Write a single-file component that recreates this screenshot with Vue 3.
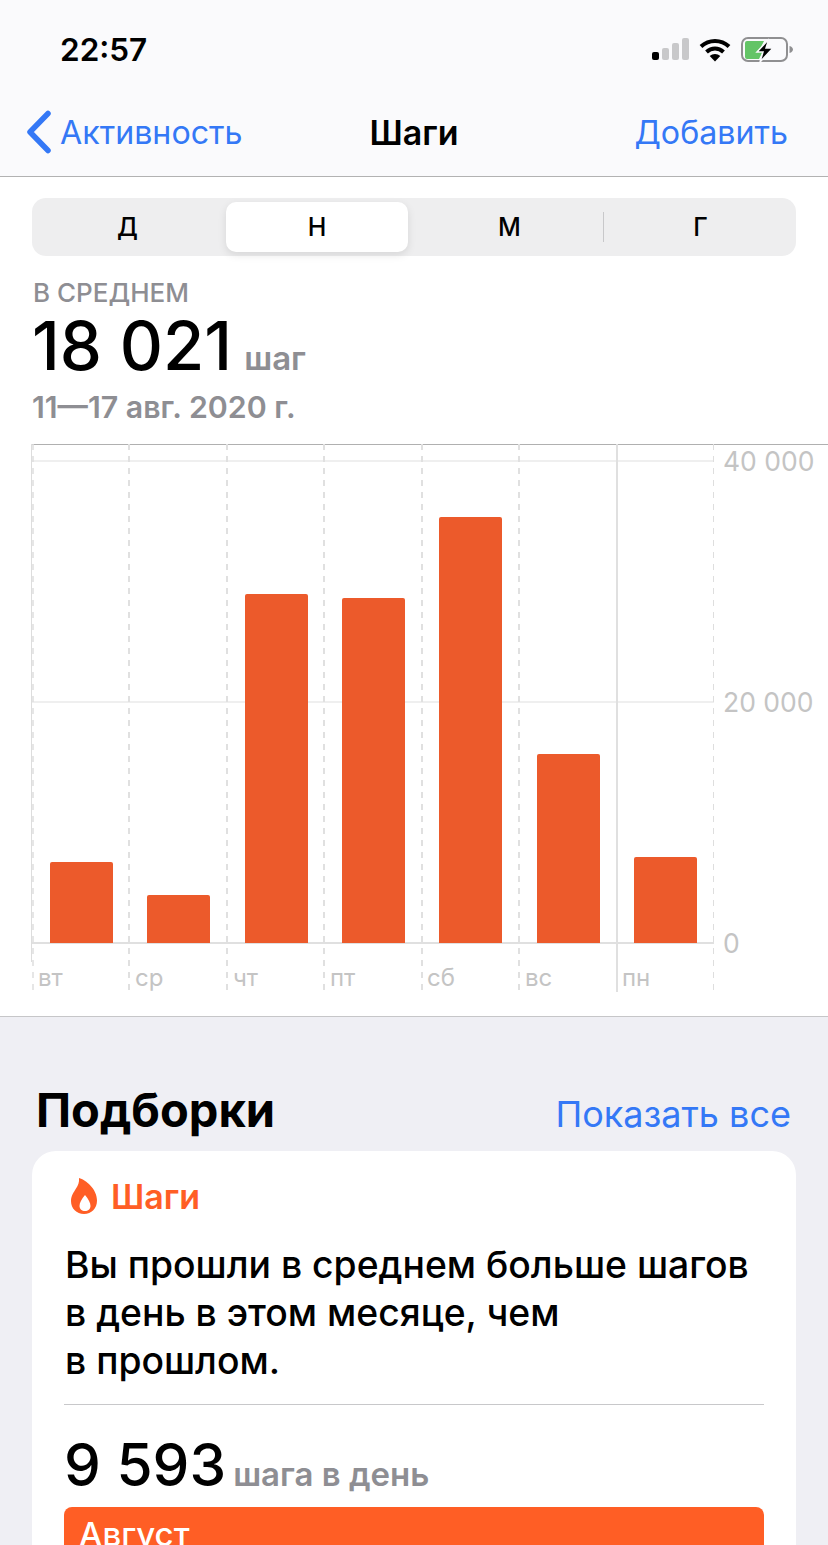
<script setup>
const segments = [
  { label: 'Д' },
  { label: 'Н', active: true },
  { label: 'М' },
  { label: 'Г' }
]

const bars = [
  { x: 50, top: 862, day: 'вт' },
  { x: 147, top: 895, day: 'ср' },
  { x: 245, top: 594, day: 'чт' },
  { x: 342, top: 598, day: 'пт' },
  { x: 439, top: 517, day: 'сб' },
  { x: 537, top: 754, day: 'вс' },
  { x: 634, top: 857, day: 'пн' }
]

const chartTop = 444
const dayLines = [129, 227, 324, 422, 519]
const grid = [
  { y: 461, label: '40 000' },
  { y: 702, label: '20 000' },
  { y: 943, label: '0' }
]
</script>

<template>
  <div class="page">
    <header class="head">
      <div class="status">
        <span class="time">22:57</span>
        <div class="status-icons">
          <svg class="signal" width="37" height="24" viewBox="0 0 37 24">
            <rect x="0" y="14" width="7" height="8" rx="2" fill="#000" />
            <rect x="10" y="10" width="7" height="12" rx="2" fill="#c8c8ca" />
            <rect x="20" y="5" width="7" height="17" rx="2" fill="#c8c8ca" />
            <rect x="30" y="0" width="7" height="22" rx="2" fill="#c8c8ca" />
          </svg>
          <svg class="wifi" width="32" height="24" viewBox="0 0 32 24" fill="none" stroke="#000" stroke-width="4">
            <path d="M2 8.500C10 1 22 1 30 8.500" />
            <path d="M7.500 14c5-4.600 12-4.600 17 0" />
            <path d="M16 23.500l-5.300-5.400c3-2.700 7.600-2.700 10.600 0z" fill="#000" stroke="none" />
          </svg>
          <svg class="battery" width="53" height="26" viewBox="0 0 53 26">
            <rect x="1" y="1" width="45" height="23" rx="6" fill="none" stroke="#8f8f91" stroke-width="2" />
            <path d="M6 4h17l-5 10h4l-4 8H6a2 2 0 0 1-2-2V6a2 2 0 0 1 2-2z" fill="#63c466" />
            <path d="M48.500 9c2.300.6 3.500 2 3.500 3.500S50.800 15.400 48.500 16z" fill="#8f8f91" />
            <path d="M28 2L16 15h6l-3 10 13-14h-7z" fill="#000" stroke="#f9f9fb" stroke-width="1.500" />
          </svg>
        </div>
      </div>
      <nav class="nav">
        <div class="nav-back">
          <svg width="28" height="44" viewBox="0 0 28 44" fill="none" stroke="#3478f6" stroke-width="5.500" stroke-linecap="round" stroke-linejoin="round">
            <path d="M23 3.500L5 22l18 18.500" />
          </svg>
          <span>Активность</span>
        </div>
        <span class="nav-title">Шаги</span>
        <span class="nav-add">Добавить</span>
      </nav>
    </header>

    <section class="summary">
      <div class="segments">
        <div v-for="(s, i) in segments" :key="s.label" class="segment" :class="{ active: s.active, divided: i === 2 }">
          {{ s.label }}
        </div>
      </div>
      <div class="caption">В СРЕДНЕМ</div>
      <div class="total"><span class="total-num">18 021</span><span class="total-unit">шаг</span></div>
      <div class="range">11—17 авг. 2020 г.</div>

      <svg class="chart" width="828" height="572" viewBox="0 444 828 572">
        <line x1="32" x2="714" :y1="461" :y2="461" stroke="#efefef" stroke-width="2" />
        <line x1="32" x2="714" :y1="702" :y2="702" stroke="#efefef" stroke-width="2" />
        <line x1="32" x2="714" :y1="943" :y2="943" stroke="#e0e0e0" stroke-width="2" />
        <line x1="32" x2="828" :y1="chartTop + 0.500" :y2="chartTop + 0.500" stroke="#b0b0b0" />
        <line x1="31.500" x2="31.500" y1="444" y2="962" stroke="#dddddd" />
        <line x1="33" x2="33" y1="444" y2="992" stroke="#dedede" stroke-width="1.500" stroke-dasharray="6 6" />
        <line v-for="x in dayLines" :key="x" :x1="x" :x2="x" y1="444" y2="992" stroke="#e0e0e0" stroke-width="2" stroke-dasharray="6 6" />
        <line x1="617" x2="617" y1="444" y2="992" stroke="#e0e0e0" stroke-width="2" />
        <line x1="713.500" x2="713.500" y1="444" y2="992" stroke="#dedede" stroke-dasharray="6 6" />
        <path
          v-for="b in bars"
          :key="b.day"
          :d="`M${b.x} 943V${b.top + 2}a2 2 0 0 1 2-2h59a2 2 0 0 1 2 2V943z`"
          fill="#ec5a2b"
        />
        <text v-for="b in bars" :key="'t' + b.day" :x="b.x - 12" y="986" class="axis">{{ b.day }}</text>
        <text v-for="g in grid" :key="g.y" x="723" :y="g.y + 10" class="axis axis-y">{{ g.label }}</text>
      </svg>
    </section>

    <section class="picks">
      <div class="picks-head">
        <h2>Подборки</h2>
        <span class="show-all">Показать все</span>
      </div>
      <article class="card">
        <div class="card-title">
          <svg width="26" height="36" viewBox="0 0 26 36">
            <path
              fill="#ff5e25"
              fill-rule="evenodd"
              d="M8 0C15 2 26 11 26 22.500 26 30.500 20.500 36 13 36 5.500 36 0 30.500 0 23 0 17.500 3 14 5 10.500 7 7.500 8.500 4 8 0zm6 17C10.500 21 8.500 25 8.500 28c0 3 2.500 5 5.500 5s5.500-2 5.500-5c0-3-2-7-5.500-11z"
            />
          </svg>
          <span>Шаги</span>
        </div>
        <p class="card-text">Вы прошли в среднем больше шагов<br />в день в этом месяце, чем<br />в прошлом.</p>
        <div class="card-line"></div>
        <div class="card-stat"><span class="stat-num">9 593</span><span class="stat-unit">шага в день</span></div>
        <div class="month-bar">Август</div>
      </article>
    </section>
  </div>
</template>

<style>
html,
body {
  margin: 0;
  background: #fff;
}
</style>

<style scoped>
.page {
  width: 828px;
  height: 1545px;
  overflow: hidden;
  font-family: Inter, "Liberation Sans", sans-serif;
  color: #000;
  background: #fff;
}

.head {
  height: 176px;
  background: #fafafc;
  border-bottom: 1px solid #b2b2b2;
}

.status {
  height: 88px;
  padding: 11px 34px 0 60px;
  display: flex;
  align-items: center;
  justify-content: space-between;
  box-sizing: border-box;
}

.time {
  font-size: 31.500px;
  font-weight: 600;
}

.status-icons {
  display: flex;
  align-items: center;
  gap: 10px;
}

.nav {
  height: 88px;
  padding: 0 40px;
  display: grid;
  grid-template-columns: minmax(0, 1fr) auto minmax(0, 1fr);
  align-items: center;
  font-size: 32.200px;
  color: #3478f6;
}

.nav-back {
  display: flex;
  align-items: center;
  gap: 7px;
  margin-left: -15px;
}

.nav-title {
  font-size: 34px;
  font-weight: 600;
  color: #000;
}

.nav-add {
  justify-self: end;
}

.segments {
  margin: 21px 32px 0;
  height: 58px;
  padding: 4px 0;
  box-sizing: border-box;
  display: grid;
  grid-template-columns: repeat(4, 191px);
  background: #eeeeef;
  border-radius: 14px;
}

.segment {
  position: relative;
  display: flex;
  align-items: center;
  justify-content: center;
  font-size: 25px;
  font-weight: 500;
}

.segment.active {
  margin: 0 6px 0 3px;
  background: #fff;
  border-radius: 10px;
  box-shadow: 0 3px 8px rgba(0, 0, 0, 0.1);
}

.segment.divided::after {
  content: '';
  position: absolute;
  right: 1px;
  top: 10px;
  bottom: 10px;
  width: 1px;
  background: #c8c8ca;
}

.caption {
  margin: 22px 0 0 33px;
  font-size: 26px;
  font-weight: 500;
  line-height: 30px;
  color: #8e8e93;
}

.total {
  margin: 4px 0 0 32px;
  display: flex;
  align-items: baseline;
  height: 68px;
  line-height: 68px;
}

.total-num {
  font-size: 67px;
  font-weight: 500;
}

.total-unit {
  margin-left: 12px;
  font-size: 33px;
  font-weight: 600;
  color: #8e8e93;
}

.range {
  margin: 9px 0 0 32px;
  font-size: 30.300px;
  font-weight: 600;
  line-height: 36px;
  color: #8e8e93;
}

.chart {
  display: block;
  margin-top: 19px;
}

.axis {
  font-size: 24px;
  fill: #c4c4c4;
}

.axis-y {
  font-size: 26.500px;
}

.picks {
  border-top: 1px solid #c6c6c8;
  background: #efeff4;
  height: 600px;
  padding: 0 32px;
}

.picks-head {
  height: 134px;
  display: flex;
  align-items: flex-end;
  justify-content: space-between;
  padding: 0 5px 13px 4px;
  box-sizing: border-box;
}

.picks-head h2 {
  margin: 0;
  font-size: 47px;
  line-height: 56px;
  font-weight: 700;
}

.show-all {
  font-size: 36px;
  line-height: 48px;
  color: #3478f6;
}

.card {
  background: #fff;
  border-radius: 24px 24px 0 0;
  padding: 26px 32px 0;
  height: 500px;
}

.card-title {
  display: flex;
  align-items: center;
  gap: 14px;
  height: 38px;
  margin-left: 7px;
  font-size: 34px;
  font-weight: 600;
  color: #ff5e25;
}

.card-text {
  margin: 26px 0 0 1px;
  font-size: 37.300px;
  line-height: 48px;
  font-weight: 500;
}

.card-line {
  margin-top: 19px;
  height: 1px;
  background: #c8c8ca;
}

.card-stat {
  display: flex;
  align-items: baseline;
  margin: 28px 0 0;
  height: 64px;
  line-height: 64px;
}

.stat-num {
  font-size: 58.500px;
  font-weight: 500;
}

.stat-unit {
  margin-left: 7px;
  font-size: 33px;
  font-weight: 600;
  color: #8e8e93;
}

.month-bar {
  margin-top: 10px;
  height: 60px;
  padding-left: 15px;
  background: #ff5e25;
  border-radius: 8px 8px 0 0;
  font-size: 33px;
  font-weight: 500;
  line-height: 54px;
  color: #fff;
}
</style>
